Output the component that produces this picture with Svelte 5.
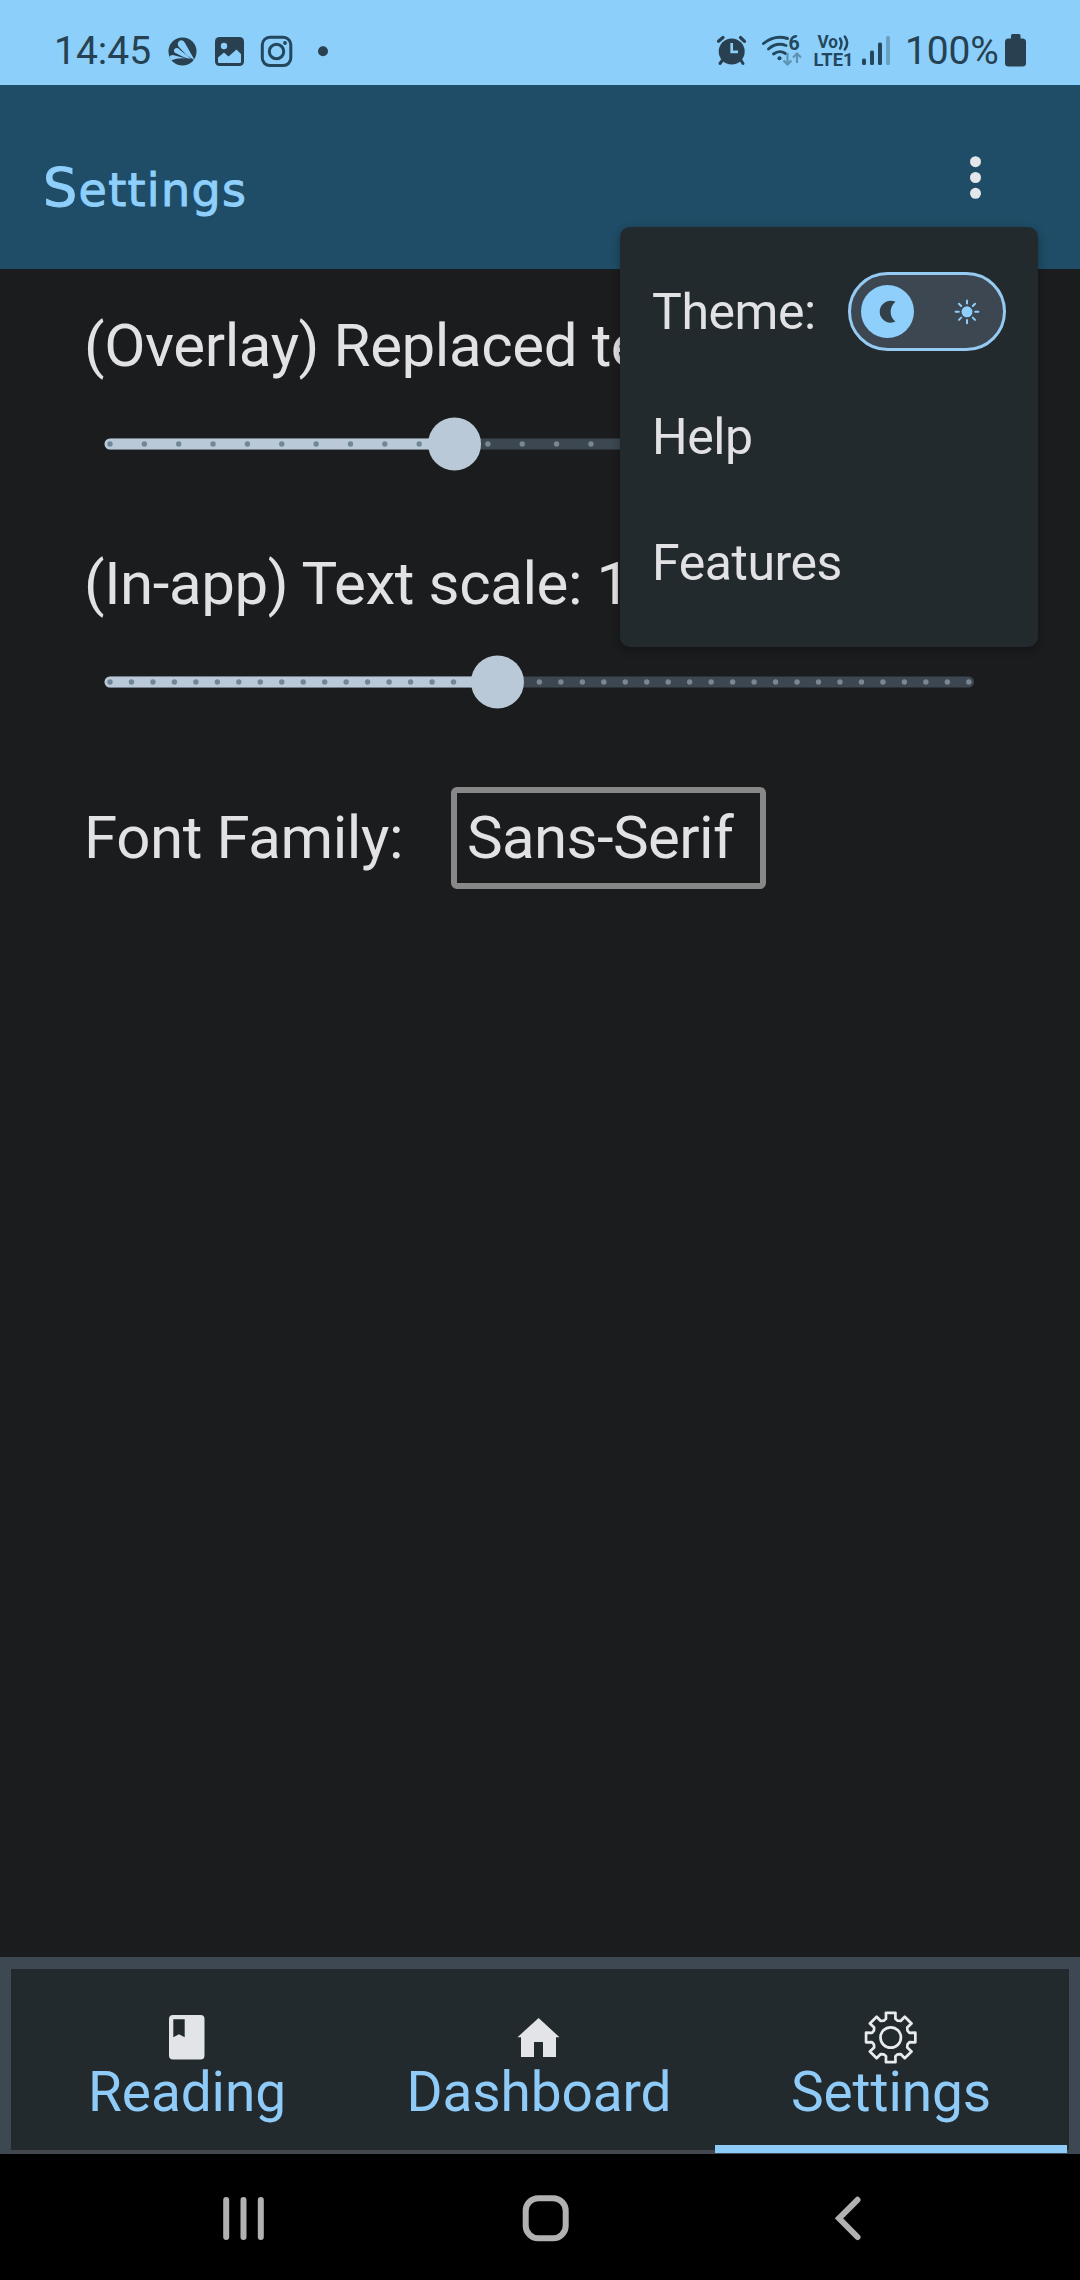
<script>
  const TRACK_START = 110;
  const TRACK_LENGTH = 858.8;

  const sliders = [
    { label: '(Overlay) Replaced te', steps: 25, value: 10 },
    { label: '(In-app) Text scale: 1', steps: 40, value: 18 }
  ];

  function tickX(i, steps) {
    return TRACK_START + (i * TRACK_LENGTH) / steps;
  }

  // Outline of an eight-toothed gear centred on the origin
  function gearPath() {
    const tooth = [
      [-22.5, 18.2],
      [-14, 19.3],
      [-11, 25.1],
      [11, 25.1],
      [14, 19.3],
      [22.5, 18.2]
    ];
    const points = [];
    for (let t = 0; t < 8; t++) {
      for (const [deg, r] of tooth) {
        const a = ((t * 45 + deg) * Math.PI) / 180;
        points.push(`${(r * Math.sin(a)).toFixed(2)} ${(-r * Math.cos(a)).toFixed(2)}`);
      }
    }
    return 'M' + points.join('L') + 'Z';
  }

  const gear = gearPath();
  const rays = [0, 45, 90, 135, 180, 225, 270, 315];
</script>

<div class="screen">
  <div class="status">
    <span class="clock">14:45</span>
    <svg class="left-icons" width="174" height="69" viewBox="156 16 174 69">
      <circle cx="182.5" cy="51.5" r="14" fill="#28404f" />
      <g fill="#8ccffb">
        <path d="M178.5 46.500 Q176.500 42.500 180 40.500 Q183.500 39.500 185 43 L194.500 60 Q190 57.500 187 55.500Z" />
        <path d="M174.500 52.500 Q173 49.500 175.500 48.300 Q177.500 47.500 179.500 49.500 L191 58.800 Q187 58.500 183.500 57Z" />
        <path d="M169.500 57.500 Q169.500 55 173 55 L186 58.600 Q178 57.500 171.500 60.300Z" />
      </g>
      <rect x="215" y="37" width="29" height="29" rx="4.500" fill="#28404f" />
      <circle cx="224" cy="46" r="3.200" fill="#8ccffb" />
      <path d="M218 62 V57.500 L224 52.500 L228.500 56.500 L236.500 49.500 L241 54 V62 Q241 63 240 63 H219 Q218 63 218 62Z" fill="#8ccffb" />
      <g fill="none" stroke="#23475c">
        <rect x="262.300" y="37.300" width="28.500" height="28.300" rx="7.500" stroke-width="3" />
        <circle cx="276.500" cy="51.500" r="7.200" stroke-width="3" />
      </g>
      <circle cx="285" cy="43" r="1.900" fill="#23475c" />
      <circle cx="323" cy="51.200" r="5" fill="#28404f" />
    </svg>
    <svg class="right-icons" width="185" height="69" viewBox="712 16 185 69">
      <circle cx="731.700" cy="51.500" r="13" fill="#28404f" />
      <g stroke="#28404f" stroke-linecap="round" fill="none">
        <path d="M718.500 41.300 L723 37.500 M744.500 41.300 L740.500 37.500" stroke-width="3.200" />
        <path d="M723 59.500 L720 63.500 M740.500 59.500 L743 63.500" stroke-width="3" />
      </g>
      <path d="M731.700 43 V51.800 H738" stroke="#8ccffb" stroke-width="2.700" fill="none" />
      <g stroke="#23475c" stroke-linecap="round" fill="none" stroke-width="2.900">
        <path d="M763.500 43.500 Q774.500 34.500 787.500 38.500" />
        <path d="M768.500 49 Q776.500 42 786 45.500" />
        <path d="M773.500 54 Q779.500 49.500 785.500 53.500" />
      </g>
      <circle cx="779.500" cy="58.300" r="2" fill="#23475c" />
      <text x="788.500" y="49.700" font-size="19.500" font-weight="700" fill="#23475c">6</text>
      <g stroke="#5e93b3" stroke-width="2.200" fill="none">
        <path d="M787.500 53 V64 M783.500 60.500 L787.500 64.500 L791.500 60.500" />
        <path d="M797 63 V54 M793 57.500 L797 53.500 L801 57.500" />
      </g>
      <text x="817.500" y="48.300" font-size="17.500" font-weight="700" fill="#23475c" textLength="20.500" lengthAdjust="spacingAndGlyphs">Vo</text>
      <g stroke="#23475c" stroke-width="2.500" fill="none" stroke-linecap="round">
        <path d="M840 38.500 Q843 43.500 840 48.500" />
        <path d="M844.800 36.500 Q849.500 43 844.800 49.500" />
      </g>
      <text x="813.500" y="65.700" font-size="17.500" font-weight="700" fill="#23475c" textLength="40" lengthAdjust="spacingAndGlyphs">LTE1</text>
      <g fill="#23475c">
        <rect x="862" y="58.500" width="4" height="6.500" rx="1.500" />
        <rect x="870" y="50.500" width="4" height="14.500" rx="1.500" />
        <rect x="878" y="42.500" width="4" height="22.500" rx="1.500" />
        <rect x="886" y="36" width="4" height="29" rx="1.500" fill="#69a1c4" />
      </g>
    </svg>
    <span class="percent">100%</span>
    <svg class="battery" width="23" height="69" viewBox="1004 16 23 69">
      <rect x="1011" y="34" width="9.500" height="8" rx="1.500" fill="#28404f" />
      <rect x="1005" y="38.500" width="21" height="28" rx="3.500" fill="#28404f" />
    </svg>
  </div>

  <header class="appbar">
    <h1>Settings</h1>
    <svg class="more" width="15" height="47" viewBox="0 0 15 47">
      <circle cx="7.500" cy="7.700" r="5.500" />
      <circle cx="7.500" cy="23.500" r="5.500" />
      <circle cx="7.500" cy="39.300" r="5.500" />
    </svg>

    <div class="menu">
      <div class="menu-row">
        <span>Theme:</span>
        <svg class="toggle" width="158" height="80" viewBox="848 272 158 80">
          <rect x="849.500" y="273.500" width="155" height="76" rx="38" fill="#3c4751" stroke="#95caf3" stroke-width="3" />
          <circle cx="887.500" cy="311.500" r="26.500" fill="#8ecffc" />
          <path d="M895.500 301.800 A11 11 0 1 0 895.500 321.600 A12.500 12.500 0 0 1 895.500 301.800Z" fill="#333f49" />
          <circle cx="967" cy="311.800" r="5.500" fill="#8ecffc" />
          {#each rays as angle}
            <path d="M967 303.600 V300.400" transform="rotate({angle} 967 311.800)" stroke="#8ecffc" stroke-width="2" stroke-linecap="round" />
          {/each}
        </svg>
      </div>
      <div class="menu-row">Help</div>
      <div class="menu-row">Features</div>
    </div>
  </header>

  <main>
    {#each sliders as s}
      <section>
        <div class="label">{s.label}</div>
        <svg class="slider" width="1080" height="54" viewBox="0 0 1080 54">
          <rect x="104.500" y="21.500" width="869.500" height="11" rx="5.500" fill="#3c4751" />
          <rect x="104.500" y="21.500" width={tickX(s.value, s.steps) - 104.5} height="11" rx="5.500" fill="#b9c9d7" />
          {#each Array(s.steps + 1) as _, i}
            <circle cx={tickX(i, s.steps)} cy="27" r="2.700" fill={i < s.value ? '#718797' : '#7a8692'} />
          {/each}
          <circle cx={tickX(s.value, s.steps) + 1} cy="27" r="26.500" fill="#b9c9d7" />
        </svg>
      </section>
    {/each}
    <div class="font-row">
      <span class="font-label">Font Family:</span>
      <span class="select">Sans-Serif</span>
    </div>
  </main>

  <nav class="tabs">
    <div class="tab">
      <svg width="54" height="54" viewBox="0 0 54 54">
        <path fill-rule="evenodd" fill="#e2e4e7" d="M13 5 H40.500 Q44.500 5 44.500 9 V45.500 Q44.500 49.500 40.500 49.500 H13 Q9 49.500 9 45.500 V9 Q9 5 13 5Z M13.300 9.200 V27.200 L19 24.200 L24.700 27.200 V9.200Z" />
      </svg>
      <span>Reading</span>
    </div>
    <div class="tab">
      <svg width="54" height="54" viewBox="0 0 54 54">
        <path fill="#e2e4e7" d="M26.600 8 L47.500 27.200 H44 V47 H31 V32 H22 V47 H9 V27.200 H5.500Z" />
      </svg>
      <span>Dashboard</span>
    </div>
    <div class="tab active">
      <svg width="54" height="54" viewBox="-26.700 -27.500 54 54">
        <path d={gear} fill="none" stroke="#e8eaec" stroke-width="2.700" stroke-linejoin="round" />
        <circle r="10.200" fill="none" stroke="#e8eaec" stroke-width="2.700" />
      </svg>
      <span>Settings</span>
    </div>
  </nav>

  <div class="sysnav">
    <svg width="1080" height="126" viewBox="0 2154 1080 126">
      <g fill="none" stroke="#b1b1b1" stroke-width="6">
        <path d="M226.200 2200 V2237 M243.500 2200 V2237 M260.800 2200 V2237" stroke-linecap="round" />
        <rect x="525.700" y="2198.200" width="40" height="40" rx="12.500" />
        <path d="M857.500 2199.800 L839 2218.300 L857.500 2237" stroke-linecap="round" />
      </g>
    </svg>
  </div>
</div>

<style>
  :global(body) {
    margin: 0;
    background: #1b1c1e;
  }

  .screen {
    width: 1080px;
    height: 2280px;
    display: flex;
    flex-direction: column;
    overflow: hidden;
    background: #1b1c1e;
    color: #e2e2e5;
    font-family: Roboto, sans-serif;
  }

  svg {
    display: block;
    flex: none;
  }

  .status {
    box-sizing: border-box;
    height: 85px;
    padding: 16px 53px 0 54px;
    display: flex;
    align-items: center;
    background: #8ccffb;
    color: #254152;
    font-size: 39px;
    white-space: nowrap;
  }

  .clock {
    width: 102px;
  }

  .right-icons {
    margin-left: auto;
  }

  .percent {
    width: 99px;
    margin-left: 8px;
    letter-spacing: -0.2px;
  }

  .appbar {
    position: relative;
    box-sizing: border-box;
    height: 184px;
    padding: 0 97px 0 43px;
    display: flex;
    justify-content: space-between;
    background: #1f4c66;
  }

  h1 {
    margin: 71px 0 0;
    height: 64px;
    line-height: 64px;
    color: #8ecffc;
    font-family: 'DejaVu Sans', sans-serif;
    font-weight: 400;
    font-size: 46px;
    letter-spacing: 1.3px;
    -webkit-text-stroke: 1px #8ecffc;
  }

  h1::first-letter {
    font-size: 54px;
  }

  .more {
    margin-top: 69px;
    fill: #e4e7ea;
  }

  .menu {
    position: absolute;
    z-index: 2;
    top: 142px;
    left: 620px;
    box-sizing: border-box;
    width: 418px;
    height: 420px;
    padding: 22px 32px 0;
    border-radius: 10px;
    background: #232a2e;
    box-shadow: 0 3px 9px rgba(0, 0, 0, 0.3);
    font-size: 50px;
    letter-spacing: -0.45px;
  }

  .menu-row {
    height: 125.5px;
    display: flex;
    align-items: center;
    justify-content: space-between;
  }

  main {
    flex: 1;
    padding-top: 42px;
    letter-spacing: -0.4px;
  }

  section {
    height: 238px;
  }

  .label {
    height: 70px;
    margin-bottom: 36px;
    padding-left: 84px;
    line-height: 70px;
    font-size: 60px;
    white-space: nowrap;
  }

  .font-row {
    height: 102px;
    padding-left: 84px;
    display: flex;
    align-items: center;
    font-size: 60px;
    line-height: 90px;
  }

  .font-label {
    width: 367px;
  }

  .select {
    box-sizing: border-box;
    width: 315px;
    height: 102px;
    padding-left: 10px;
    border: 6px solid #888889;
    border-radius: 6px;
    letter-spacing: -0.6px;
    white-space: nowrap;
  }

  .tabs {
    box-sizing: border-box;
    height: 197px;
    padding: 12px 13px 0 11px;
    display: flex;
    background: linear-gradient(#232a2e, #232a2e) 11px 12px / 1058px 181px no-repeat #3d4852;
  }

  .tab {
    box-sizing: border-box;
    width: 352px;
    height: 185px;
    padding-top: 41px;
    display: flex;
    flex-direction: column;
    align-items: center;
    border-bottom: 4px solid #45474f;
    color: #8ecbf8;
    font-size: 55px;
    line-height: 56px;
    letter-spacing: -0.1px;
  }

  .tab.active {
    height: 184px;
    border-bottom: 8px solid #8ecbf8;
  }

  .sysnav {
    height: 126px;
    background: #000;
  }
</style>
